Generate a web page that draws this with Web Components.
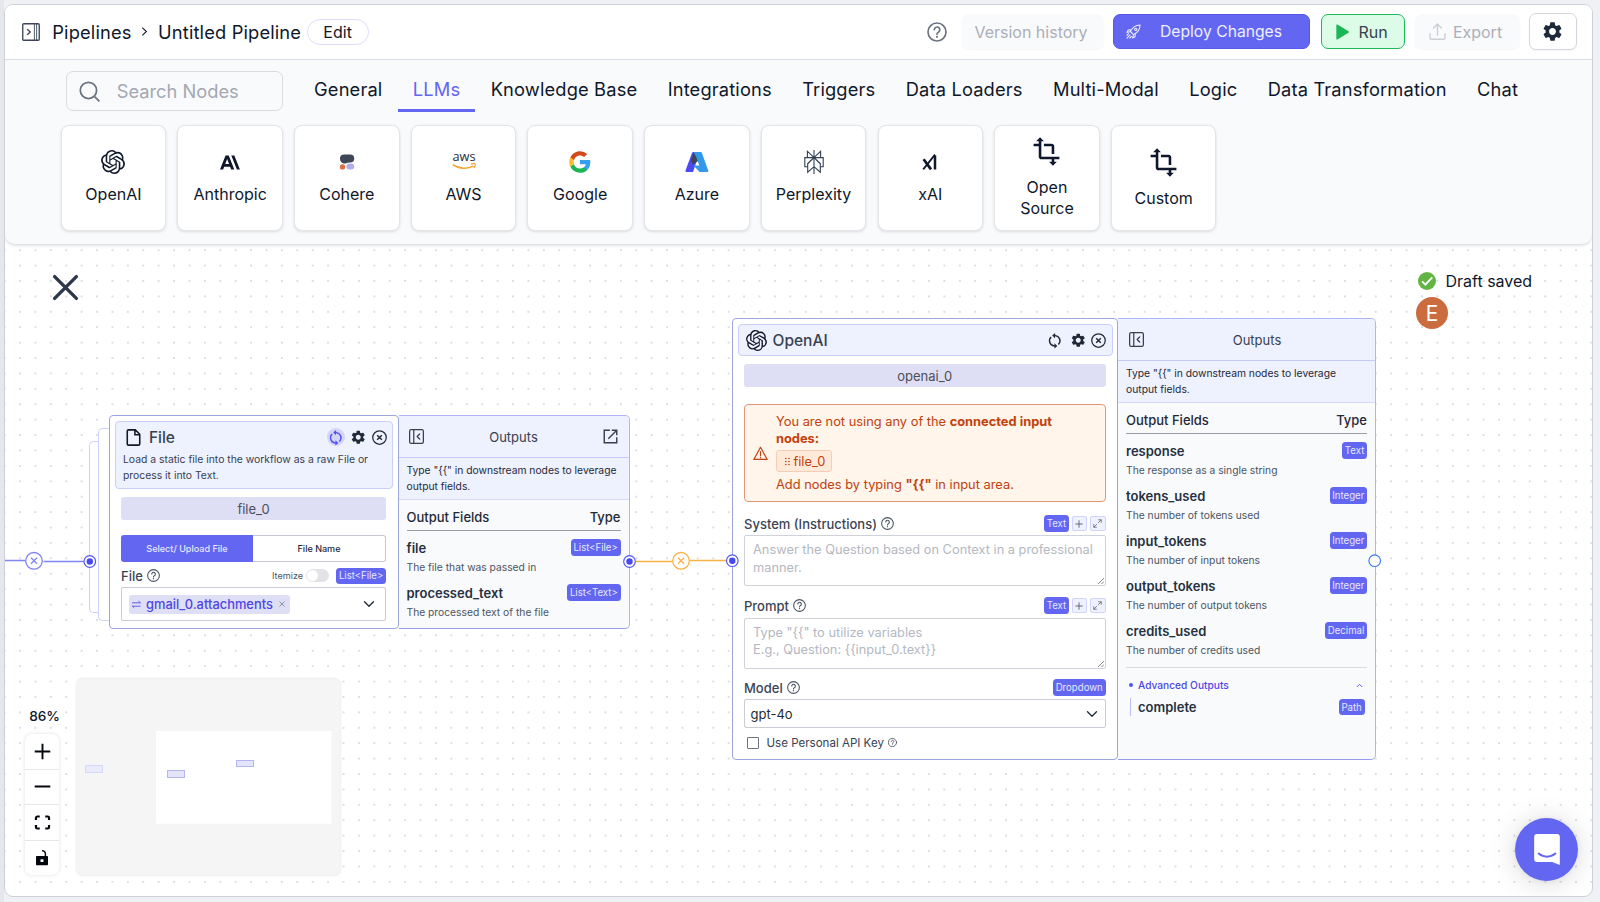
<!DOCTYPE html>
<html lang="en">
<head>
<meta charset="utf-8">
<title>Pipelines</title>
<style>
html, body {
	margin: 0;
	height: 100%;
	overflow: hidden;
}
body {
	background: #f0f1f4;
	font-family: Inter, "Liberation Sans", sans-serif;
	color: #0f172a;
}
</style>
</head>
<body>
<pipeline-app></pipeline-app>
<script>
(function () {
	const ICONS = {
		openai: '<path fill="currentColor" d="M22.2819 9.8211a5.9847 5.9847 0 0 0-.5157-4.9108 6.0462 6.0462 0 0 0-6.5098-2.9A6.0651 6.0651 0 0 0 4.9807 4.1818a5.9847 5.9847 0 0 0-3.9977 2.9 6.0462 6.0462 0 0 0 .7427 7.0966 5.98 5.98 0 0 0 .511 4.9107 6.051 6.051 0 0 0 6.5146 2.9001A5.9847 5.9847 0 0 0 13.2599 24a6.0557 6.0557 0 0 0 5.7718-4.2058 5.9894 5.9894 0 0 0 3.9977-2.9001 6.0557 6.0557 0 0 0-.7475-7.0729zm-9.022 12.6081a4.4755 4.4755 0 0 1-2.8764-1.0408l.1419-.0804 4.7783-2.7582a.7948.7948 0 0 0 .3927-.6813v-6.7369l2.02 1.1686a.071.071 0 0 1 .038.0615v5.5826a4.504 4.504 0 0 1-4.4945 4.4944zm-9.6607-4.1254a4.4708 4.4708 0 0 1-.5346-3.0137l.142.0852 4.783 2.7582a.7712.7712 0 0 0 .7806 0l5.8428-3.3685v2.3324a.0804.0804 0 0 1-.0332.0615L9.74 19.9502a4.4992 4.4992 0 0 1-6.1408-1.6464zM2.3408 7.8956a4.485 4.485 0 0 1 2.3655-1.9728V11.6a.7664.7664 0 0 0 .3879.6765l5.8144 3.3543-2.0201 1.1685a.0757.0757 0 0 1-.071 0l-4.8303-2.7865A4.504 4.504 0 0 1 2.3408 7.872zm16.5963 3.8558L13.1038 8.364 15.1192 7.2a.0757.0757 0 0 1 .071 0l4.8303 2.7913a4.4944 4.4944 0 0 1-.6765 8.1042v-5.6772a.79.79 0 0 0-.407-.667zm2.0107-3.0231l-.142-.0852-4.7735-2.7818a.7759.7759 0 0 0-.7854 0L9.409 9.2297V6.8974a.0662.0662 0 0 1 .0284-.0615l4.8303-2.7866a4.4992 4.4992 0 0 1 6.6802 4.66zM8.3065 12.863l-2.02-1.1638a.0804.0804 0 0 1-.038-.0567V6.0742a4.4992 4.4992 0 0 1 7.3757-3.4537l-.142.0805L8.704 5.459a.7948.7948 0 0 0-.3927.6813zm1.0976-2.3654l2.602-1.4998 2.6069 1.4998v2.9994l-2.5974 1.4997-2.6067-1.4997Z"/>',
		anthropic: '<g transform="translate(2 2.6) scale(.83)"><path fill="currentColor" d="M17.3041 3.541h-3.6718l6.696 16.918H24Zm-10.6082 0L0 20.459h3.7442l1.3693-3.5527h7.0052l1.3693 3.5528h3.7442L10.5363 3.5409Zm-.3712 10.2232 2.2914-5.9456 2.2914 5.9456Z"/></g>',
		cohere: '<rect x="5" y="4.4" width="14.2" height="8.2" rx="4.1" fill="#3d4757"/><path d="M5.600 9.500c0 3 2.400 4.600 5 4l5-2z" fill="#3d4757"/><circle cx="7.500" cy="16.900" r="2.700" fill="#d96f4a"/><rect x="11.400" y="13.600" width="7.800" height="6" rx="3" fill="#b3adee"/>',
		aws: '<text x="12" y="11.3" text-anchor="middle" font-size="12.8" font-weight="500" letter-spacing="-.1" fill="#252f3e" font-family="Open Sans, sans-serif">aws</text><path d="M.8 14.6c6.6 4.6 15 4.6 20.8 1.3" fill="none" stroke="#f7a233" stroke-width="1.6"/><path d="M18.8 14.3c2-.9 4-.8 4.4-.3.4.6-.1 2.8-1.5 4" fill="none" stroke="#f7a233" stroke-width="1.2"/>',
		google: '<g transform="translate(.7 .7) scale(.94)"><path fill="#34a0ee" d="M23 12.25c0-.8-.07-1.55-.2-2.25H12v4.3h6.2c-.3 1.4-1.1 2.6-2.3 3.4v2.8h3.7C21.8 18.5 23 15.7 23 12.25z"/><path fill="#1cb755" d="M12 23.5c3.1 0 5.7-1 7.6-2.8l-3.7-2.8c-1 .7-2.3 1.1-3.9 1.1-3 0-5.5-2-6.4-4.7H1.8v2.9C3.7 20.9 7.6 23.5 12 23.5z"/><path fill="#fdbb3c" d="M5.6 14.3a6.9 6.9 0 0 1 0-4.5V6.9H1.8a11.5 11.5 0 0 0 0 10.3z"/><path fill="#cf4a1c" d="M12 5.1c1.7 0 3.2.6 4.4 1.7L19.7 3.5A11.4 11.4 0 0 0 12 .5C7.6.5 3.7 3.1 1.8 6.9l3.8 2.9C6.500 7.100 9 5.100 12 5.100z"/></g>',
		azure: '<path fill="#4c49ee" d="M8.600 2h6.200L8 22H1.500c-.8 0-1.200-.7-1-1.400L6.900 3.200C7.100 2.500 7.800 2 8.600 2z"/><path fill="#3b4658" d="M8.600 2h4l.4 9-5 3.500L6 10.500z"/><path fill="#3397ea" d="M8.500 2h6.800c.8 0 1.400.5 1.700 1.200l6.200 17.300c.3.800-.2 1.500-1 1.500h-7.600L8.500 15.400h5.800L11.200 7z"/>',
		perplexity: '<g fill="none" stroke="#334155" stroke-width="1.100"><path d="M12 0v24M12 7.600 5.400 1.200v6.400h13.200V1.200L12 7.600M2.800 7.600h18.400v9.200h-2.900v-3.200L12 7.600l-6.300 6v3.200H2.800zM12 7.600l-6.300 6.200v8.400l6.300-5.500 6.300 5.500v-8.400z"/></g>',
		xai: '<g fill="none" stroke="currentColor"><path d="M5.600 9.200 13 19.400" stroke-width="2.700"/><path d="M5.200 19.400 17 4.600" stroke-width="1.800"/><path d="M17 19.400V5.400" stroke-width="2.500"/></g>',
		transform: '<path fill="currentColor" d="M22 18v-2H8V4h2L7 1 4 4h2v2H2v2h4v8c0 1.100.9 2 2 2h8v2h-2l3 3 3-3h-2v-2h4zM10 8h6v6h2V8c0-1.100-.9-2-2-2h-6v2z"/>',
		gear: '<path fill="currentColor" d="M19.140 12.940c.04-.3.06-.61.06-.94 0-.32-.02-.64-.07-.94l2.030-1.580c.18-.14.23-.41.12-.61l-1.920-3.320c-.12-.22-.37-.29-.59-.22l-2.390.96c-.5-.38-1.030-.7-1.620-.94l-.36-2.540c-.04-.24-.24-.41-.48-.41h-3.840c-.24 0-.43.17-.47.41l-.36 2.540c-.59.24-1.130.57-1.620.94l-2.390-.96c-.22-.08-.47 0-.59.22L2.740 8.870c-.12.21-.08.47.12.61l2.030 1.580c-.05.3-.09.63-.09.94s.02.64.07.94l-2.030 1.580c-.18.14-.23.41-.12.61l1.920 3.320c.12.22.37.29.59.22l2.390-.96c.5.38 1.030.7 1.620.94l.36 2.540c.05.24.24.41.48.41h3.840c.24 0 .44-.17.47-.41l.36-2.540c.59-.24 1.130-.56 1.620-.94l2.390.96c.22.08.47 0 .59-.22l1.920-3.320c.12-.22.07-.47-.12-.61l-2.010-1.580zM12 15.600c-1.980 0-3.600-1.620-3.600-3.600s1.620-3.600 3.600-3.600 3.600 1.620 3.600 3.600-1.620 3.600-3.600 3.600z"/>',
		sidebar: '<g fill="none" stroke="currentColor" stroke-width="1.800"><rect x="1" y="1" width="22" height="22" rx="1.500"/><path d="M16.500 1v22M19.500 1v22" stroke-width="1.200"/><path d="m7 8.200 4 3.800-4 3.800"/></g>',
		panel: '<g fill="none" stroke="currentColor" stroke-width="2" stroke-linecap="round" stroke-linejoin="round"><rect x="1" y="1" width="22" height="22" rx="2.500"/><path d="M7.600 1v22M17 8l-4 4 4 4"/></g>',
		chevright: '<path d="m8 5 7.500 7L8 19" fill="none" stroke="currentColor" stroke-width="2"/>',
		chevdown: '<path d="m3 7.500 9 9 9-9" fill="none" stroke="currentColor" stroke-width="2.600" stroke-linecap="round" stroke-linejoin="round"/>',
		chevup: '<path d="m3 17 9-9 9 9" fill="none" stroke="currentColor" stroke-width="3"/>',
		help: '<g fill="none" stroke="currentColor" stroke-width="2" stroke-linecap="round"><circle cx="12" cy="12" r="10.800"/><path d="M8.800 9.300a3.300 3.300 0 1 1 5.200 2.700c-1.300.9-2 1.300-2 2.600"/></g><circle cx="12" cy="17.800" r="1.300" fill="currentColor"/>',
		search: '<g fill="none" stroke="currentColor" stroke-width="2"><circle cx="10.800" cy="10.800" r="9.300"/><path d="m17.800 17.800 5.500 5.500"/></g>',
		rocket: '<g fill="none" stroke="currentColor" stroke-width="1.700" stroke-linecap="round" stroke-linejoin="round"><path d="M22.500 1.500C15 1.500 10 6 7 12l5 5c6-3 10.500-8 10.500-15.500zM8.500 9.200 3.500 9.500l-2 4L7 12M14.800 15.500l-.3 5-4 2L12 17"/><circle cx="15.500" cy="8.500" r="1.800"/><path d="m1.500 22.500 5-5M1.500 18l2.500-2.500M6 22.500 8.500 20"/></g>',
		play: '<path d="M3.500 1.500v21c0 .8.900 1.200 1.600.7l16.600-10.200c.8-.5.8-1.600 0-2.100L5.100.8C4.400.3 3.500.7 3.500 1.500z" fill="currentColor"/>',
		upload: '<g fill="none" stroke="currentColor" stroke-width="2" stroke-linecap="round" stroke-linejoin="round"><path d="M1.500 15v6.500c0 .8.600 1.500 1.500 1.500h18c.9 0 1.500-.7 1.500-1.500V15M12 17V1.500M6.500 7 12 1.500 17.500 7"/></g>',
		close: '<path d="m3 3 18 18M21 3 3 21" fill="none" stroke="currentColor" stroke-width="2.800" stroke-linecap="round"/>',
		closecircle: '<g fill="none" stroke="currentColor" stroke-width="2"><circle cx="12" cy="12" r="10.800"/><path d="m8.300 8.300 7.400 7.400M15.700 8.300l-7.400 7.400" stroke-width="2.400"/></g>',
		file: '<path d="M5 1.200h9.500L20.800 7.500V21a1.800 1.800 0 0 1-1.800 1.800H5A1.800 1.800 0 0 1 3.200 21V3A1.800 1.800 0 0 1 5 1.200zM14 1.200V8h6.800" fill="none" stroke="currentColor" stroke-width="2.200"/>',
		sync: '<g fill="none" stroke="currentColor" stroke-width="2.200"><path d="M11.500 4H13a8 8 0 0 1 4.600 13.700M12.500 20H11A8 8 0 0 1 6.400 6.300"/></g><path fill="currentColor" d="M12.500 0v8L8 4zM11.500 16v8l4.500-4z"/>',
		external: '<g fill="none" stroke="currentColor" stroke-width="2.300"><path d="M11 2H2v20h20v-9M14 2h8v8M22 2 8.500 15.500"/></g>',
		warn: '<g fill="none" stroke="currentColor" stroke-width="1.900" stroke-linecap="round" stroke-linejoin="round"><path d="M12 2 1.300 21.500h21.400z"/><path d="M12 9v6.500M12 18.200v.4"/></g>',
		drag: '<g fill="currentColor"><circle cx="7.500" cy="4" r="2.200"/><circle cx="16" cy="4" r="2.200"/><circle cx="7.500" cy="12" r="2.200"/><circle cx="16" cy="12" r="2.200"/><circle cx="7.500" cy="20" r="2.200"/><circle cx="16" cy="20" r="2.200"/></g>',
		swap: '<g fill="none" stroke="currentColor" stroke-width="2.200"><path d="M0 7.500h23M0 16.500h23M17.500 3l5 4.500M6 21 1 16.500"/></g>',
		plus: '<path d="M12 1v22M1 12h22" fill="none" stroke="currentColor" stroke-width="2.700"/>',
		minus: '<path d="M1 12h22" fill="none" stroke="currentColor" stroke-width="2.700"/>',
		expand: '<g fill="none" stroke="currentColor" stroke-width="2"><path d="M14 2h8v8M22 2l-8.500 8.500M10 22H2v-8M2 22l8.500-8.500"/></g>',
		fit: '<path d="M8 2.500H4.500a2 2 0 0 0-2 2V8M16 2.500h3.500a2 2 0 0 1 2 2V8M8 21.500H4.500a2 2 0 0 1-2-2V16M16 21.500h3.500a2 2 0 0 0 2-2V16" fill="none" stroke="currentColor" stroke-width="3.200" transform="translate(-1.200 0) scale(1.100 1)"/>',
		unlock: '<path fill="currentColor" fill-rule="evenodd" d="M4.500 9H16V5.500C16 3 14 2.300 12 2.300V0c3.500 0 6.200 1.800 6.200 5.500V9h1.300c.8 0 1.500.7 1.500 1.500v11c0 .8-.7 1.500-1.500 1.500h-15c-.8 0-1.500-.7-1.500-1.500v-11C3 9.700 3.700 9 4.500 9zm5.300 5v4h4.400v-4z"/>',
		check: '<circle cx="12" cy="12" r="12" fill="#62b544"/><path d="m5.500 12.500 4.300 4.300L19 7.200" fill="none" stroke="#fff" stroke-width="2.500"/>',
		intercom: '<path fill="#fff" d="M3.500 0h17A2.500 2.500 0 0 1 23 2.500V26.500l-6.500-2.500h-13A2.500 2.500 0 0 1 1 21.500v-19A2.500 2.500 0 0 1 3.500 0z"/><path d="M4.800 16.800c4.200 3.500 10.200 3.500 14.400 0" fill="none" stroke="#6366f1" stroke-width="1.700" stroke-linecap="round"/>',
	};

	// Registers an element whose shadow root is cloned from one template.
	function define(name, html, setup) {
		const tpl = document.createElement('template');
		tpl.innerHTML = html;
		customElements.define(name, class extends HTMLElement {
			constructor() {
				super();
				this.attachShadow({mode: 'open'});
				this.shadowRoot.appendChild(tpl.content.cloneNode(true));
			}
			connectedCallback() {
				if (setup)
					setup(this, this.shadowRoot);
			}
		});
	}

	define('ui-icon', `
		<style>
		:host { display: inline-block; flex: none; width: 16px; height: 16px; }
		svg { display: block; width: 100%; height: 100%; overflow: visible; }
		</style>
		<svg viewBox="0 0 24 24"></svg>
	`, function (el, root) {
		root.querySelector('svg').innerHTML = ICONS[el.getAttribute('name')] || '';
		var size = el.getAttribute('size');
		if (size) {
			el.style.width = size + 'px';
			el.style.height = size + 'px';
		}
	});

	define('top-button', `
		<style>
		:host {
			display: flex;
			align-items: center;
			justify-content: center;
			box-sizing: border-box;
			height: 35px;
			border: 1px solid transparent;
			border-radius: 7px;
			font-size: 16px;
			white-space: nowrap;
		}
		:host([kind="muted"]) { padding-right: 3px; background: #f9fafb; color: #abafb8; box-shadow: 0 1px 2px #0000000a; }
		:host([kind="primary"]) { padding-right: 1px; background: #6366f1; border-color: #5558ea; color: #eef0ff; font-size: 15.700px; }
		:host([kind="run"]) { padding-right: 3px; background: #dcfce7; border-color: #1fb85a; color: #374151; }
		:host([kind="plain"]) { height: 37px; background: #fff; border-color: #d3d6dd; color: #1e293b; box-shadow: 0 1px 2px #0000000d; }
		:host([kind="pill"]) { height: 26px; border-color: #dcdefc; border-radius: 13px; background: #fff; }
		</style>
		<slot></slot>
	`);

	define('app-header', `
		<style>
		:host {
			display: flex;
			align-items: center;
			box-sizing: border-box;
			height: 55px;
			padding: 0 15.500px 1px 17.300px;
			border-bottom: 1px solid #dcdfe5;
			background: #fff;
			font-size: 18.300px;
		}
		.crumb { white-space: nowrap; letter-spacing: .15px; }
		.end { display: flex; align-items: center; margin-left: auto; }
		</style>
		<ui-icon name="sidebar" size="18" style="color:#3b4658"></ui-icon>
		<span class="crumb" style="margin-left:12px">Pipelines</span>
		<ui-icon name="chevright" size="13" style="margin:0 7px 0 6.500px"></ui-icon>
		<span class="crumb">Untitled Pipeline</span>
		<top-button kind="pill" style="margin-left:5.500px;width:62px">Edit</top-button>
		<div class="end">
			<ui-icon name="help" size="20" style="color:#6b7280;margin-right:15px"></ui-icon>
			<top-button kind="muted" style="width:142px;margin-right:9px">Version history</top-button>
			<top-button kind="primary" style="width:197px;margin-right:11px"><ui-icon name="rocket" size="15" style="margin:0 19px 0 -13px"></ui-icon>Deploy Changes</top-button>
			<top-button kind="run" style="width:84px;margin-right:10px"><ui-icon name="play" size="16" style="color:#1cb755;margin-right:8px"></ui-icon>Run</top-button>
			<top-button kind="muted" style="width:105px;margin-right:9.500px"><ui-icon name="upload" size="17" style="color:#ccd0d6;margin-right:7px"></ui-icon>Export</top-button>
			<top-button kind="plain" style="width:47.500px"><ui-icon name="gear" size="23"></ui-icon></top-button>
		</div>
	`);

	define('node-tab', `
		<style>
		:host {
			display: block;
			box-sizing: border-box;
			height: 43px;
			padding: 6.500px 15.200px 0;
			border-bottom: 3px solid transparent;
			font-size: 18.300px;
			letter-spacing: .15px;
			line-height: 28px;
			white-space: nowrap;
		}
		:host([active]) { color: #6366f1; border-color: #6366f1; }
		</style>
		<slot></slot>
	`);

	define('node-card', `
		<style>
		:host {
			display: flex;
			flex-direction: column;
			align-items: center;
			justify-content: center;
			gap: 10px;
			box-sizing: border-box;
			width: 105.500px;
			height: 106px;
			padding-bottom: 1px;
			border: 1px solid #e3e5e9;
			border-radius: 8px;
			background: #fff;
			box-shadow: 0 1px 3px #0000001f;
			font-size: 16px;
			line-height: 21px;
			text-align: center;
		}
		</style>
		<ui-icon></ui-icon>
		<slot></slot>
	`, function (el, root) {
		var icon = root.querySelector('ui-icon');
		var name = el.getAttribute('icon');
		var size = name === 'transform' ? '31' : '24';
		icon.setAttribute('name', name);
		icon.setAttribute('size', size);
		// connectedCallback has already run for the inner icon, refresh it
		root.replaceChild(icon.cloneNode(true), icon);
	});

	define('node-palette', `
		<style>
		:host {
			display: block;
			position: relative;
			box-sizing: border-box;
			height: 185px;
			padding-top: 7px;
			border-bottom: 1px solid #dfe1e6;
			border-radius: 0 0 10px 10px;
			background: #f9fafc;
			box-shadow: 0 1px 3px #0000001c;
		}
		.bar { display: flex; align-items: center; height: 48px; }
		.search {
			display: flex;
			align-items: center;
			box-sizing: border-box;
			width: 217.500px;
			height: 39.500px;
			margin: 0 15.700px 0 60.700px;
			padding-left: 12px;
			border: 1px solid #d8dae0;
			border-radius: 7px;
			font-size: 18.300px;
			color: #a3a8b2;
		}
		.search ui-icon { color: #6b7280; margin-right: 17px; }
		.tabs { display: flex; margin-top: -2px; }
		.cards { display: flex; gap: 11.200px; margin: 10px 0 0 55.700px; }
		</style>
		<div class="bar">
			<div class="search"><ui-icon name="search" size="21"></ui-icon>Search Nodes</div>
			<div class="tabs">
				<node-tab>General</node-tab>
				<node-tab active>LLMs</node-tab>
				<node-tab>Knowledge Base</node-tab>
				<node-tab>Integrations</node-tab>
				<node-tab>Triggers</node-tab>
				<node-tab>Data Loaders</node-tab>
				<node-tab>Multi-Modal</node-tab>
				<node-tab>Logic</node-tab>
				<node-tab>Data Transformation</node-tab>
				<node-tab>Chat</node-tab>
			</div>
		</div>
		<div class="cards">
			<node-card icon="openai">OpenAI</node-card>
			<node-card icon="anthropic">Anthropic</node-card>
			<node-card icon="cohere">Cohere</node-card>
			<node-card icon="aws">AWS</node-card>
			<node-card icon="google">Google</node-card>
			<node-card icon="azure">Azure</node-card>
			<node-card icon="perplexity">Perplexity</node-card>
			<node-card icon="xai">xAI</node-card>
			<node-card icon="transform"><span>Open<br>Source</span></node-card>
			<node-card icon="transform">Custom</node-card>
		</div>
	`);

	define('type-badge', `
		<style>
		:host {
			display: inline-flex;
			align-items: center;
			box-sizing: border-box;
			height: 16.500px;
			padding: 0 2.700px;
			border-radius: 3.500px;
			background: #6366f1;
			color: #e6e8ff;
			font-size: 9.650px;
			white-space: nowrap;
			font-weight: 400;
		}
		</style>
		<slot></slot>
	`);

	// Label row above an input: name and help on the left, type and actions on the right.
	define('field-label', `
		<style>
		:host {
			display: flex;
			align-items: center;
			height: 16.500px;
			font-size: 13px;
			font-weight: 500;
			color: #3b4453;
			white-space: nowrap;
		}
		.help { margin-left: 4.500px; color: #4b5563; }
		.end { display: flex; align-items: center; gap: 2.800px; margin-left: auto; }
		.act {
			display: none;
			align-items: center;
			justify-content: center;
			box-sizing: border-box;
			width: 15.500px;
			height: 15.500px;
			border: 1px solid #d0d4fb;
			border-radius: 2px;
			background: #eef1ff;
			color: #555c6b;
		}
		:host([actions]) .act { display: flex; }
		</style>
		<slot></slot>
		<ui-icon class="help" name="help" size="13"></ui-icon>
		<div class="end">
			<slot name="end"></slot>
			<span class="act"><ui-icon name="plus" size="8"></ui-icon></span>
			<span class="act"><ui-icon name="expand" size="9"></ui-icon></span>
		</div>
	`);

	define('text-area', `
		<style>
		:host {
			display: block;
			position: relative;
			box-sizing: border-box;
			height: 51px;
			padding: 5px 8px;
			border: 1px solid #cfd2d8;
			border-radius: 2px;
			background: #fff;
			color: #b4b8bf;
			font-size: 12.820px;
			line-height: 17.700px;
		}
		svg { position: absolute; right: 1px; bottom: 1px; }
		</style>
		<slot></slot>
		<svg width="6" height="6"><path d="M0 6 6 0M3.500 6 6 3.500" stroke="#777" stroke-width=".9"/></svg>
	`);

	define('select-box', `
		<style>
		:host {
			display: flex;
			align-items: center;
			justify-content: space-between;
			box-sizing: border-box;
			height: 29.500px;
			padding: 0 7px 0 5.500px;
			border: 1px solid #c9ccd2;
			border-radius: 2px;
			background: #fff;
			color: #1f2937;
			font-size: 13px;
		}
		</style>
		<slot></slot>
		<ui-icon name="chevdown" size="12"></ui-icon>
	`);

	define('output-field', `
		<style>
		:host { display: block; height: 45px; color: #263040; }
		.row { display: flex; align-items: center; justify-content: space-between; height: 18px; font-size: 13px; font-weight: 600; }
		.desc { margin-top: 2px; font-size: 10.270px; line-height: 16px; color: #4b5563; white-space: nowrap; }
		type-badge { position: relative; top: -1px; }
		</style>
		<div class="row"><span class="name"></span><type-badge></type-badge></div>
		<div class="desc"><slot></slot></div>
	`, function (el, root) {
		root.querySelector('.name').textContent = el.getAttribute('name');
		root.querySelector('type-badge').textContent = el.getAttribute('type');
	});

	define('outputs-panel', `
		<style>
		:host {
			display: block;
			box-sizing: border-box;
			border: 1.500px solid #b0b5f5;
			border-bottom-color: #989df0;
			border-left: none;
			border-radius: 0 5px 5px 0;
			background: #f9fafc;
			color: #374151;
		}
		.head {
			display: flex;
			align-items: center;
			justify-content: space-between;
			box-sizing: border-box;
			height: 42px;
			padding: 0 10.500px 0 10.500px;
			border-bottom: 1.500px solid #c6cafa;
			background: #eef1fe;
			border-radius: 0 4px 0 0;
			font-size: 13px;
		}
		.head .none { width: 0; margin-right: -6px; }
		.hint {
			box-sizing: border-box;
			height: 42px;
			padding: 5px 8px 0;
			border-bottom: 1px solid #d6d9fb;
			background: #eef1fe;
			font-size: 10.300px;
			line-height: 15.700px;
			color: #1f2937;
			white-space: nowrap;
		}
		.body { padding: 0 8px 0 8px; }
		.titles {
			display: flex;
			align-items: center;
			justify-content: space-between;
			height: 31px;
			padding-top: 3px;
			margin-bottom: 8px;
			box-sizing: border-box;
			border-bottom: 1px solid #9a9da5;
			color: #1f2937;
			font-size: 13px;
			font-weight: 500;
		}
		</style>
		<div class="head">
			<ui-icon name="panel" size="15"></ui-icon>
			<span>Outputs</span>
			<slot name="action"><span class="none"></span></slot>
		</div>
		<div class="hint">Type "{{" in downstream nodes to leverage<br>output fields.</div>
		<div class="body">
			<div class="titles"><span>Output Fields</span><span>Type</span></div>
			<slot></slot>
		</div>
	`);

	define('flow-node', `
		<style>
		:host { display: flex; position: absolute; font-size: 13px; }
		.main {
			position: relative;
			box-sizing: border-box;
			width: var(--main-width);
			padding: 5.200px 4.500px 0;
			border: 1.500px solid #9ba7dc;
			border-radius: 4px;
			background: #fff;
		}
		.head {
			box-sizing: border-box;
			padding: 0 5.500px 0 7.500px;
			border: 1px solid #c9d0fb;
			border-radius: 4px;
			background: #eef1fe;
			color: #374151;
		}
		.row { display: flex; align-items: center; height: 30px; padding-left: var(--logo-indent, 0px); font-size: 15.500px; }
		.row b { flex: 1; font-weight: 500; margin-left: calc(5.500px + var(--logo-indent, 0px)); }
		.row ui-icon { color: #1f2937; }
		.sync { display: flex; align-items: center; justify-content: center; width: 18px; height: 18px; margin-right: 5.500px; border-radius: 50%; }
		:host([looped]) .sync { background: #d3d4f8; }
		:host([looped]) .sync ui-icon { color: #5153f0; }
		.body { padding: 8px 7px 0 6.500px; }
		.name {
			display: flex;
			align-items: center;
			justify-content: center;
			height: 22.500px;
			border-radius: 3px;
			background: #dedef5;
			color: #4b4f58;
		}
		</style>
		<div class="main">
			<div class="head">
				<div class="row">
					<ui-icon id="logo"></ui-icon><b></b>
					<span class="sync"><ui-icon name="sync" size="15.500"></ui-icon></span>
					<ui-icon name="gear" size="16.500" style="margin-right:5px"></ui-icon>
					<ui-icon name="closecircle" size="15"></ui-icon>
				</div>
				<slot name="about"></slot>
			</div>
			<div class="body">
				<div class="name"></div>
				<slot></slot>
			</div>
		</div>
		<slot name="outputs"></slot>
	`, function (el, root) {
		var logo = document.createElement('ui-icon');
		logo.setAttribute('name', el.getAttribute('icon'));
		logo.setAttribute('size', el.getAttribute('icon-size'));
		logo.style.color = '#111827';
		root.getElementById('logo').replaceWith(logo);
		root.querySelector('b').textContent = el.getAttribute('label');
		root.querySelector('.name').textContent = el.getAttribute('name');
	});

	define('file-node', `
		<style>
		.about { padding: 0 0 5px; font-size: 10.370px; line-height: 15.500px; color: #374151; white-space: nowrap; }
		flow-node { left: 104px; top: 410.300px; height: 214.200px; --main-width: 289.500px; --logo-indent: 1.700px; }
		.ghost {
			position: absolute;
			box-sizing: border-box;
			border: 1px solid #cdd1fb;
			border-right: none;
			border-radius: 5px 0 0 5px;
			background: #fff;
		}
		.tabs { display: flex; height: 27px; margin: 14.800px 0 5.800px; font-size: 9.050px; font-weight: 500; }
		.tabs span { flex: 1; display: flex; align-items: center; justify-content: center; box-sizing: border-box; }
		.tabs span:first-child { background: #6366f1; color: #e6e8ff; border-radius: 3px 0 0 3px; }
		.tabs span:last-child { border: 1px solid #c6c9d0; border-left: none; border-radius: 0 3px 3px 0; color: #1f2937; }
		.itemize { font-size: 9.100px; font-weight: 400; color: #4b5563; }
		.switch { width: 23px; height: 13px; margin-right: 4.500px; border-radius: 7px; background: #e2e3e7; }
		.switch::before { content: ""; display: block; width: 11px; height: 11px; margin: 1px; border-radius: 50%; background: #fff; }
		select-box { height: 34px; margin-top: 3px; padding: 0 10px 0 6.500px; }
		.chip {
			display: flex;
			align-items: center;
			height: 19px;
			padding: 0 5px 0 3.500px;
			border-radius: 3px;
			background: #dedef5;
			color: #4f46e5;
			font-size: 12.900px;
			font-weight: 500;
		}
		</style>
		<div class="ghost" style="left:84px;top:435.500px;width:12px;height:172px"></div>
		<div class="ghost" style="left:93px;top:423px;width:12px;height:193px"></div>
		<flow-node looped icon="file" icon-size="17" label="File" name="file_0">
			<div slot="about" class="about">Load a static file into the workflow as a raw File or<br>process it into Text.</div>
			<div class="tabs"><span>Select/ Upload File</span><span>File Name</span></div>
			<field-label>File
				<span slot="end" class="itemize">Itemize</span>
				<span slot="end" class="switch"></span>
				<type-badge slot="end">List&lt;File&gt;</type-badge>
			</field-label>
			<select-box>
				<span class="chip"><ui-icon name="swap" size="9" style="margin-right:5px"></ui-icon>gmail_0.attachments<ui-icon name="close" size="6" style="margin-left:6px;color:#6b7280"></ui-icon></span>
			</select-box>
			<outputs-panel slot="outputs" style="width:231px">
				<ui-icon slot="action" name="external" size="15"></ui-icon>
				<output-field name="file" type="List&lt;File&gt;">The file that was passed in</output-field>
				<output-field name="processed_text" type="List&lt;Text&gt;">The processed text of the file</output-field>
			</outputs-panel>
		</flow-node>
	`);

	define('openai-node', `
		<style>
		flow-node { left: 727px; top: 313.300px; height: 442.200px; --main-width: 386px; }
		.alert {
			display: flex;
			align-items: center;
			box-sizing: border-box;
			height: 97.500px;
			margin: 17.500px 0 13.300px;
			padding: 0 8px;
			border: 1px solid #e79675;
			border-radius: 4px;
			background: #fff5eb;
			color: #c2410c;
			font-size: 12.850px;
			line-height: 17.700px;
		}
		.file {
			display: inline-flex;
			align-items: center;
			height: 20px;
			margin: 2.300px 0 3.700px;
			padding: 0 5.500px;
			border: 1px solid #f3cdb7;
			border-radius: 3px;
			background: #ffeada;
		}
		text-area { margin: 3.700px 0 10.900px; }
		select-box { margin: 3px 0 6.500px; }
		.key { display: flex; align-items: center; padding-left: 2.500px; font-size: 11.550px; line-height: 16px; color: #374151; }
		.box { width: 10px; height: 10px; margin-right: 8px; border: 1px solid #6b7280; border-radius: 1px; }
		.advanced {
			display: flex;
			align-items: center;
			height: 33.500px;
			border-top: 1px solid #d9dbe1;
			font-size: 10.200px;
			font-weight: 500;
			color: #4f46e5;
		}
		.advanced i { width: 4px; height: 4px; margin: 0 5.500px 0 2.500px; border-radius: 50%; background: #4f52ee; }
		.advanced ui-icon { margin: 0 4px 0 auto; }
		.path { display: flex; align-items: center; justify-content: space-between; height: 18px; margin: -3.800px 2.500px 0 3.500px; padding-left: 7.500px; border-left: 1px solid #b9bdf8; color: #263040; font-weight: 600; }
		</style>
		<flow-node icon="openai" icon-size="21" label="OpenAI" name="openai_0">
			<div class="alert">
				<ui-icon name="warn" size="15" style="margin-right:8px"></ui-icon>
				<div>You are not using any of the <b>connected input<br>nodes:</b><br>
					<span class="file"><ui-icon name="drag" size="9" style="margin-right:2px"></ui-icon>file_0</span><br>
					Add nodes by typing <b>"{{"</b> in input area.</div>
			</div>
			<field-label actions>System (Instructions)<type-badge slot="end">Text</type-badge></field-label>
			<text-area>Answer the Question based on Context in a professional manner.</text-area>
			<field-label actions>Prompt<type-badge slot="end">Text</type-badge></field-label>
			<text-area>Type "{{" to utilize variables<br>E.g., Question: {{input_0.text}}</text-area>
			<field-label>Model<type-badge slot="end">Dropdown</type-badge></field-label>
			<select-box><span>gpt-4o</span></select-box>
			<div class="key"><span class="box"></span>Use Personal API Key<ui-icon name="help" size="9" style="margin-left:4px"></ui-icon></div>
			<outputs-panel slot="outputs" style="width:258px">
				<output-field name="response" type="Text">The response as a single string</output-field>
				<output-field name="tokens_used" type="Integer">The number of tokens used</output-field>
				<output-field name="input_tokens" type="Integer">The number of input tokens</output-field>
				<output-field name="output_tokens" type="Integer">The number of output tokens</output-field>
				<output-field name="credits_used" type="Decimal">The number of credits used</output-field>
				<div class="advanced"><i></i>Advanced Outputs<ui-icon name="chevup" size="7"></ui-icon></div>
				<div class="path">complete<type-badge>Path</type-badge></div>
			</outputs-panel>
		</flow-node>
	`);

	define('flow-edges', `
		<style>
		:host { position: absolute; left: 0; top: 0; pointer-events: none; }
		svg { display: block; }
		</style>
		<svg width="1587" height="892" viewBox="5 5 1587 892" fill="none">
			<g stroke="#7f85f3" stroke-width="1.300">
				<path d="M5 560.500h20.500M43.500 561.500H84"/>
				<circle cx="34" cy="560.800" r="8.300" fill="#fff"/>
				<path d="m31 557.800 6 6M37 557.800l-6 6"/>
			</g>
			<g stroke="#fbb245" stroke-width="1.300">
				<path d="M636 561.500h36.500M690 560.500h36"/>
				<circle cx="681" cy="560.800" r="8.300" fill="#fff"/>
				<path d="m678 557.800 6 6M684 557.800l-6 6"/>
			</g>
			<g fill="#fff" stroke="#5457ee" stroke-width="1.200">
				<circle cx="89.800" cy="561.500" r="5.800"/>
				<circle cx="629.500" cy="561.500" r="5.800"/>
				<circle cx="732.300" cy="560.700" r="5.800"/>
				<circle cx="1374.700" cy="560.700" r="5.800" stroke="#3b7ff0"/>
			</g>
			<g fill="#474aee">
				<circle cx="89.800" cy="561.500" r="3.200"/>
				<circle cx="629.500" cy="561.500" r="3.200"/>
				<circle cx="732.300" cy="560.700" r="3.200"/>
			</g>
		</svg>
	`);

	define('canvas-controls', `
		<style>
		:host { position: absolute; left: 19.800px; bottom: 21px; display: flex; align-items: flex-end; gap: 18.200px; }
		.zoom { width: 34.500px; text-align: center; font-size: 13.700px; font-weight: 500; line-height: 20px; }
		.value { display: block; margin: 0 -5px 8px 0; }
		.stack {
			display: flex;
			flex-direction: column;
			border-radius: 7px;
			background: #fff;
			box-shadow: 0 0 4px #0000001f;
			color: #05070f;
		}
		.stack span { display: flex; align-items: center; justify-content: center; height: 34.500px; }
		.stack span + span { border-top: 1px solid #e6e7eb; }
		.map { width: 263px; height: 196px; border-radius: 5px; background: #f5f5f5; box-shadow: 0 0 3px #00000026; }
		.map svg { display: block; }
		</style>
		<div class="zoom">
			<span class="value">86%</span>
			<div class="stack">
				<span><ui-icon name="plus" size="17"></ui-icon></span>
				<span><ui-icon name="minus" size="17"></ui-icon></span>
				<span><ui-icon name="fit" size="15"></ui-icon></span>
				<span><ui-icon name="unlock" size="16"></ui-icon></span>
			</div>
		</div>
		<div class="map">
			<svg width="262" height="196" viewBox="77 679 262 196">
				<rect x="156" y="731" width="175.500" height="92.700" fill="#fff"/>
				<g fill="#e3e4fb" stroke="#b5b5f3">
					<rect x="85.500" y="765.500" width="17" height="7" fill="#e9eafa" stroke="#d6d8f8"/>
					<rect x="167.500" y="770.500" width="17" height="7"/>
					<rect x="236.500" y="760.500" width="17" height="6"/>
				</g>
			</svg>
		</div>
	`);

	define('pipeline-app', `
		<style>
		:host {
			display: block;
			box-sizing: border-box;
			height: 100vh;
			padding: 4px 7px 5px 4px;
			background: linear-gradient(to right, #e6e7ec 4px, #f0f1f4 4px);
		}
		.frame {
			position: relative;
			box-sizing: border-box;
			height: 100%;
			border: 1px solid #cdd0d8;
			border-radius: 9px;
			overflow: hidden;
			background: #fff radial-gradient(circle at center, #dcdee4 0.700px, transparent 1.100px) 7.300px 6.400px / 15.410px 15.410px;
		}
		.dismiss { position: absolute; left: 46px; top: 267.500px; color: #2c3649; }
		.status { position: absolute; left: 1411px; top: 265px; display: flex; flex-direction: column; gap: 5px; }
		.saved { display: flex; align-items: center; gap: 9.500px; height: 22px; padding-left: 2px; font-size: 16px; white-space: nowrap; }
		.avatar { display: flex; align-items: center; justify-content: center; width: 32px; height: 32px; border-radius: 50%; background: #cb6c3f; color: #fff; font-size: 21px; }
		.chat {
			position: absolute;
			left: 1510px;
			top: 813px;
			display: flex;
			align-items: center;
			justify-content: center;
			width: 63px;
			height: 63px;
			border-radius: 50%;
			background: #6366f1;
			box-shadow: 0 1px 6px #0000000f, 0 2px 28px #00000026;
		}
		</style>
		<div class="frame">
			<app-header></app-header>
			<node-palette></node-palette>
			<div class="canvas">
				<file-node></file-node>
				<openai-node></openai-node>
				<flow-edges></flow-edges>
				<canvas-controls></canvas-controls>
				<ui-icon class="dismiss" name="close" size="29"></ui-icon>
				<div class="status">
					<div class="saved"><ui-icon name="check" size="18"></ui-icon>Draft saved</div>
					<div class="avatar">E</div>
				</div>
				<div class="chat"><ui-icon name="intercom" size="28" style="margin-bottom:4px"></ui-icon></div>
			</div>
		</div>
	`);
})();
</script>
</body>
</html>
